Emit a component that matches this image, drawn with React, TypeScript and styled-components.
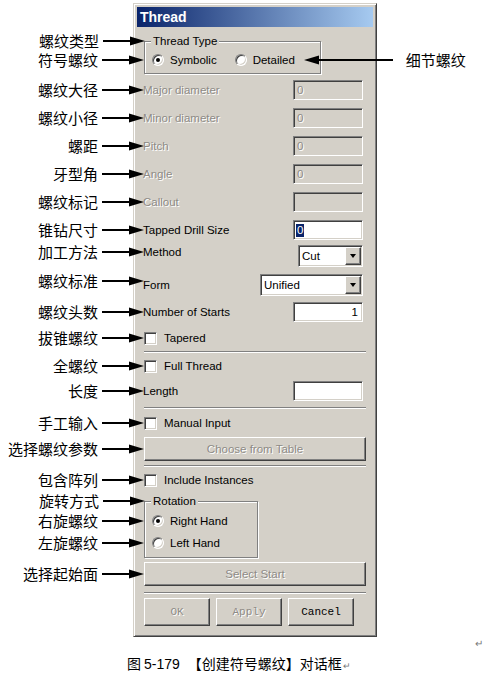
import React from "react";
import styled, { createGlobalStyle, css } from "styled-components";

const GlobalStyle = createGlobalStyle`
  html, body { margin: 0; padding: 0; background: #fff; }
  body { font-family: "Liberation Sans", "Noto Sans CJK SC", sans-serif; }
  * { box-sizing: border-box; }
`;

const GRAY = "#8e8b86";
const UI_FONT = '"Liberation Sans", Arial, sans-serif';

const Page = styled.div`
  width: 486px;
  height: 678px;
  padding-top: 3px;
  display: flex;
  flex-direction: column;
  overflow: hidden;
`;

const Dialog = styled.div`
  margin-left: 133px;
  width: 244px;
  height: 634px;
  background: #d4d0c8;
  border: 1px solid;
  border-color: #d4d0c8 #404040 #404040 #d4d0c8;
  box-shadow: inset 1px 1px 0 #fff, inset -1px -1px 0 #808080;
  padding: 3px;
  display: flex;
  flex-direction: column;
`;

const TitleBar = styled.div`
  height: 20px;
  flex: none;
  background: linear-gradient(to right, #0a246a, #a6caf0);
  color: #fff;
  font: bold 14px "Liberation Sans", Arial, sans-serif;
  display: flex;
  align-items: center;
  padding-left: 3px;
`;

const Body = styled.div`
  display: flex;
  flex-direction: column;
  padding: 0 7px;
  font-family: ${UI_FONT};
  font-size: 11.5px;
  line-height: 13px;
  color: #000;
`;

const FieldRow = styled.div<{ $mt: number; $h?: number }>`
  position: relative;
  display: flex;
  align-items: center;
  justify-content: space-between;
  margin-top: ${(p) => p.$mt}px;
  height: ${(p) => p.$h ?? 20}px;
  padding-right: 3px;
`;

const FieldLabel = styled.span<{ $disabled?: boolean; $top?: number }>`
  margin-left: -1px;
  color: ${(p) => (p.$disabled ? GRAY : "#000")};
  ${(p) => p.$disabled && css`text-shadow: 1px 1px 0 #fff;`}
  ${(p) =>
    p.$top !== undefined &&
    css`
      align-self: flex-start;
      margin-top: ${p.$top}px;
    `}
`;

const Sunken = css`
  border: 1px solid;
  border-color: #808080 #fff #fff #808080;
  box-shadow: inset 1px 1px 0 #404040, inset -1px -1px 0 #d4d0c8;
`;

const Raised = css`
  background: #d4d0c8;
  border: 1px solid;
  border-color: #fff #404040 #404040 #fff;
  box-shadow: inset -1px -1px 0 #808080;
`;

const TextBox = styled.div<{ $disabled?: boolean; $right?: boolean }>`
  ${Sunken};
  width: 70px;
  height: 20px;
  background: ${(p) => (p.$disabled ? "#d4d0c8" : "#fff")};
  color: ${(p) => (p.$disabled ? GRAY : "#000")};
  ${(p) => p.$disabled && css`text-shadow: 1px 1px 0 #fff;`}
  display: flex;
  align-items: center;
  justify-content: ${(p) => (p.$right ? "flex-end" : "flex-start")};
  padding: 0 4px 0 3px;
`;

const Selected = styled.span`
  background: #0a246a;
  color: #fff;
  padding: 0 1px;
  margin-left: -1px;
`;

const Combo = styled.div<{ $w: number }>`
  ${Sunken};
  width: ${(p) => p.$w}px;
  height: 22px;
  background: #fff;
  display: flex;
  align-items: center;
  justify-content: space-between;
  padding: 1px 1px 1px 3px;
`;

const ComboButton = styled.span`
  ${Raised};
  width: 16px;
  height: 18px;
  display: flex;
  align-items: center;
  justify-content: center;
`;

const DownTriangle = styled.span`
  width: 0;
  height: 0;
  border-left: 3.5px solid transparent;
  border-right: 3.5px solid transparent;
  border-top: 4px solid #000;
`;

const CheckRow = styled.div<{ $mt: number }>`
  position: relative;
  display: flex;
  align-items: center;
  gap: 7px;
  height: 14px;
  margin-top: ${(p) => p.$mt}px;
`;

const CheckBox = styled.span`
  ${Sunken};
  width: 13px;
  height: 13px;
  background: #fff;
  flex: none;
`;

const Separator = styled.div<{ $mt: number }>`
  height: 2px;
  margin-top: ${(p) => p.$mt}px;
  border-top: 1px solid #808080;
  border-bottom: 1px solid #fff;
`;

const Group = styled.div<{ $mt: number; $w: number; $pt: number; $pb: number; $row?: boolean }>`
  position: relative;
  width: ${(p) => p.$w}px;
  margin-top: ${(p) => p.$mt}px;
  border: 1px solid #808080;
  box-shadow: inset 1px 1px 0 #fff, 1px 1px 0 #fff;
  padding: ${(p) => p.$pt}px 0 ${(p) => p.$pb}px 7px;
  display: flex;
  flex-direction: ${(p) => (p.$row ? "row" : "column")};
  gap: ${(p) => (p.$row ? 18 : 8)}px;
`;

const GroupTitle = styled.span`
  position: absolute;
  top: -8px;
  left: 6px;
  padding: 0 2px;
  line-height: 14px;
  background: #d4d0c8;
`;

const RadioOption = styled.span`
  position: relative;
  display: inline-flex;
  align-items: center;
  gap: 6px;
  height: 14px;
`;

const RadioDot = styled.span<{ $checked?: boolean }>`
  ${Sunken};
  width: 12px;
  height: 12px;
  border-radius: 50%;
  background: #fff;
  display: flex;
  align-items: center;
  justify-content: center;
  flex: none;
  &::after {
    content: "";
    width: 4px;
    height: 4px;
    border-radius: 50%;
    background: #000;
    display: ${(p) => (p.$checked ? "block" : "none")};
  }
`;

const ButtonRow = styled.div<{ $mt: number }>`
  position: relative;
  display: flex;
  gap: 6px;
  margin-top: ${(p) => p.$mt}px;
`;

const PushButton = styled.div<{ $disabled?: boolean; $mono?: boolean }>`
  ${Raised};
  height: ${(p) => (p.$mono ? 28 : 24)}px;
  width: ${(p) => (p.$mono ? "66px" : "100%")};
  display: flex;
  align-items: center;
  justify-content: center;
  font-family: ${(p) => (p.$mono ? '"Liberation Mono", monospace' : UI_FONT)};
  font-size: ${(p) => (p.$mono ? 11 : 11.5)}px;
  color: ${(p) => (p.$disabled ? GRAY : "#000")};
  ${(p) => p.$disabled && css`text-shadow: 1px 1px 0 #fff;`}
`;

const Callout = styled.div<{ $top?: boolean; $inset?: number; $dy?: number }>`
  position: absolute;
  right: calc(100% + ${(p) => p.$inset ?? 0}px);
  top: ${(p) => (p.$top ? "0" : "50%")};
  transform: translateY(calc(-50% + ${(p) => p.$dy ?? 0}px));
  display: flex;
  align-items: center;
  gap: 4px;
  font-family: "Noto Sans CJK SC", sans-serif;
  font-size: 15px;
  line-height: 18px;
  color: #000;
  white-space: nowrap;
  text-shadow: none;
`;

const RightCallout = styled.div`
  position: absolute;
  left: calc(100% + 9px);
  top: 50%;
  transform: translateY(-50%);
  display: flex;
  align-items: center;
  gap: 13px;
  font-family: "Noto Sans CJK SC", sans-serif;
  font-size: 15px;
  line-height: 18px;
  color: #000;
  white-space: nowrap;
`;

const MarkRow = styled.div`
  height: 12px;
  display: flex;
  justify-content: flex-end;
  padding-right: 3px;
  font-size: 10px;
  line-height: 12px;
  color: #777;
  font-family: "Noto Sans CJK SC", sans-serif;
`;

const Caption = styled.div`
  margin-top: 4px;
  padding-left: 127px;
  display: flex;
  align-items: baseline;
  font-family: "Noto Sans CJK SC", sans-serif;
  font-size: 14px;
  line-height: 20px;
  color: #000;
`;

const CaptionNum = styled.span`
  font-family: "Liberation Sans", Arial, sans-serif;
  margin: 0 8px 0 3px;
`;

const ReturnMark = styled.span`
  font-size: 9px;
  color: #777;
  margin-left: 1px;
`;

const ArrowRight = () => (
  <svg width="42" height="10" viewBox="0 0 42 10">
    <rect x="0" y="4" width="30" height="2" fill="#000" />
    <polygon points="27,0.5 42,5 27,9.5" fill="#000" />
  </svg>
);

const ArrowLeft = () => (
  <svg width="89" height="10" viewBox="0 0 89 10">
    <rect x="12" y="4" width="77" height="2" fill="#000" />
    <polygon points="15,0.5 0,5 15,9.5" fill="#000" />
  </svg>
);

const Note: React.FC<{ text: string; top?: boolean; inset?: number; dy?: number }> = ({ text, top, inset, dy }) => (
  <Callout $top={top} $inset={inset} $dy={dy}>
    <span>{text}</span>
    <ArrowRight />
  </Callout>
);

const fields: { label: string; note: string; value: string }[] = [
  { label: "Major diameter", note: "螺纹大径", value: "0" },
  { label: "Minor diameter", note: "螺纹小径", value: "0" },
  { label: "Pitch", note: "螺距", value: "0" },
  { label: "Angle", note: "牙型角", value: "0" },
  { label: "Callout", note: "螺纹标记", value: "" },
];

export default function App() {
  return (
    <Page>
      <GlobalStyle />
      <Dialog>
        <TitleBar>Thread</TitleBar>
        <Body>
          <Group $mt={14} $w={177} $pt={11} $pb={6} $row>
            <GroupTitle>Thread Type</GroupTitle>
            <Note text="螺纹类型" top dy={-1} />
            <RadioOption>
              <Note text="符号螺纹" inset={8} />
              <RadioDot $checked />
              Symbolic
            </RadioOption>
            <RadioOption>
              <RadioDot />
              Detailed
              <RightCallout>
                <ArrowLeft />
                <span>细节螺纹</span>
              </RightCallout>
            </RadioOption>
          </Group>

          {fields.map((f, i) => (
            <FieldRow key={f.label} $mt={i === 0 ? 6 : 8}>
              <Note text={f.note} />
              <FieldLabel $disabled>{f.label}</FieldLabel>
              <TextBox $disabled>{f.value}</TextBox>
            </FieldRow>
          ))}

          <FieldRow $mt={8}>
            <Note text="锥钻尺寸" />
            <FieldLabel>Tapped Drill Size</FieldLabel>
            <TextBox>
              <Selected>0</Selected>
            </TextBox>
          </FieldRow>

          <FieldRow $mt={5} $h={22}>
            <Note text="加工方法" dy={-4} />
            <FieldLabel $top={1}>Method</FieldLabel>
            <Combo $w={65}>
              Cut
              <ComboButton>
                <DownTriangle />
              </ComboButton>
            </Combo>
          </FieldRow>

          <FieldRow $mt={7} $h={22}>
            <Note text="螺纹标准" dy={-4} />
            <FieldLabel>Form</FieldLabel>
            <Combo $w={103}>
              Unified
              <ComboButton>
                <DownTriangle />
              </ComboButton>
            </Combo>
          </FieldRow>

          <FieldRow $mt={6}>
            <Note text="螺纹头数" />
            <FieldLabel>Number of Starts</FieldLabel>
            <TextBox $right>1</TextBox>
          </FieldRow>

          <CheckRow $mt={9}>
            <Note text="拔锥螺纹" />
            <CheckBox />
            Tapered
          </CheckRow>

          <Separator $mt={6} />

          <CheckRow $mt={6}>
            <Note text="全螺纹" />
            <CheckBox />
            Full Thread
          </CheckRow>

          <FieldRow $mt={8}>
            <Note text="长度" />
            <FieldLabel>Length</FieldLabel>
            <TextBox />
          </FieldRow>

          <Separator $mt={6} />

          <CheckRow $mt={7}>
            <Note text="手工输入" />
            <CheckBox />
            Manual Input
          </CheckRow>

          <ButtonRow $mt={7}>
            <Note text="选择螺纹参数" />
            <PushButton $disabled>Choose from Table</PushButton>
          </ButtonRow>

          <Separator $mt={4} />

          <CheckRow $mt={6}>
            <Note text="包含阵列" />
            <CheckBox />
            Include Instances
          </CheckRow>

          <Group $mt={14} $w={114} $pt={12} $pb={7}>
            <GroupTitle>Rotation</GroupTitle>
            <Note text="旋转方式" top dy={-1} />
            <RadioOption>
              <Note text="右旋螺纹" inset={8} />
              <RadioDot $checked />
              Right Hand
            </RadioOption>
            <RadioOption>
              <Note text="左旋螺纹" inset={8} />
              <RadioDot />
              Left Hand
            </RadioOption>
          </Group>

          <ButtonRow $mt={4}>
            <Note text="选择起始面" />
            <PushButton $disabled>Select Start</PushButton>
          </ButtonRow>

          <Separator $mt={6} />

          <ButtonRow $mt={4}>
            <PushButton $mono $disabled>OK</PushButton>
            <PushButton $mono $disabled>Apply</PushButton>
            <PushButton $mono>Cancel</PushButton>
          </ButtonRow>
        </Body>
      </Dialog>
      <MarkRow>↵</MarkRow>
      <Caption>
        图<CaptionNum>5-179</CaptionNum>【创建符号螺纹】对话框<ReturnMark>↵</ReturnMark>
      </Caption>
    </Page>
  );
}
